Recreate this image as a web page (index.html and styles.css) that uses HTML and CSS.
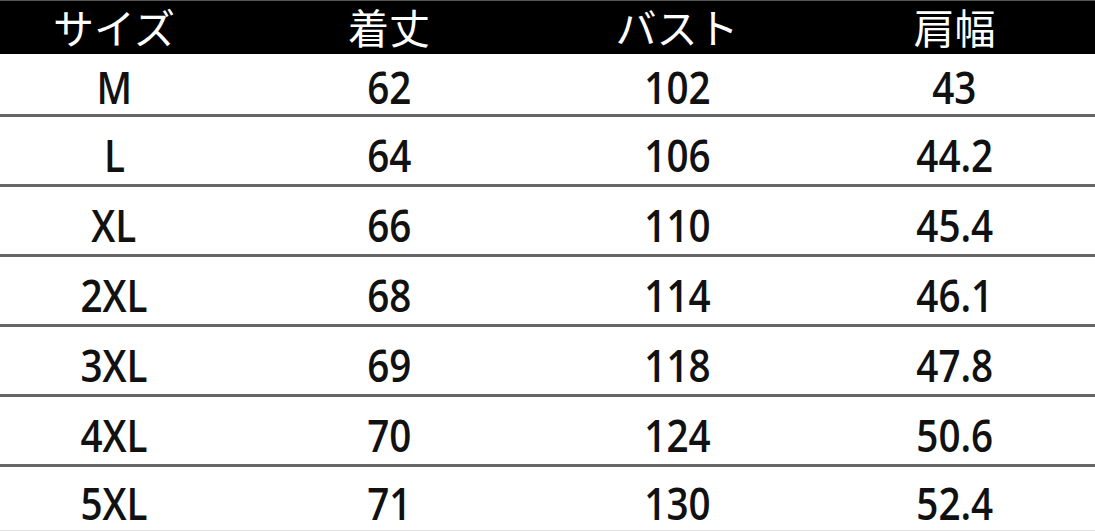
FILE: index.html
```html
<!DOCTYPE html>
<html lang="ja">
<head>
<meta charset="utf-8">
<link rel="stylesheet" href="styles.css">
</head>
<body>
<div class="table">
  <div class="row head">
    <div class="cell c1"><span>サイズ</span></div>
    <div class="cell c2"><span>着丈</span></div>
    <div class="cell c3"><span>バスト</span></div>
    <div class="cell c4"><span>肩幅</span></div>
  </div>
  <div class="row first">
    <div class="cell c1"><span>M</span></div>
    <div class="cell c2"><span>62</span></div>
    <div class="cell c3"><span>102</span></div>
    <div class="cell c4"><span>43</span></div>
  </div>
  <div class="row">
    <div class="cell c1"><span>L</span></div>
    <div class="cell c2"><span>64</span></div>
    <div class="cell c3"><span>106</span></div>
    <div class="cell c4"><span>44.2</span></div>
  </div>
  <div class="row">
    <div class="cell c1"><span>XL</span></div>
    <div class="cell c2"><span>66</span></div>
    <div class="cell c3"><span>110</span></div>
    <div class="cell c4"><span>45.4</span></div>
  </div>
  <div class="row">
    <div class="cell c1"><span>2XL</span></div>
    <div class="cell c2"><span>68</span></div>
    <div class="cell c3"><span>114</span></div>
    <div class="cell c4"><span>46.1</span></div>
  </div>
  <div class="row">
    <div class="cell c1"><span>3XL</span></div>
    <div class="cell c2"><span>69</span></div>
    <div class="cell c3"><span>118</span></div>
    <div class="cell c4"><span>47.8</span></div>
  </div>
  <div class="row">
    <div class="cell c1"><span>4XL</span></div>
    <div class="cell c2"><span>70</span></div>
    <div class="cell c3"><span>124</span></div>
    <div class="cell c4"><span>50.6</span></div>
  </div>
  <div class="row last">
    <div class="cell c1"><span>5XL</span></div>
    <div class="cell c2"><span>71</span></div>
    <div class="cell c3"><span>130</span></div>
    <div class="cell c4"><span>52.4</span></div>
  </div>
</div>
</body>
</html>
```
FILE: styles.css
```css
html, body {
  margin: 0;
  padding: 0;
  background: #ffffff;
}
.table {
  width: 1095px;
  height: 531px;
  display: flex;
  flex-direction: column;
}
.row {
  display: grid;
  grid-template-columns: 228px 322px 254px 291px;
  height: 67px;
  border-bottom: 3px solid #666666;
  box-sizing: content-box;
  font-family: "Open Sans", "Noto Sans", sans-serif;
  font-weight: 600;
  font-size: 46px;
  color: #111111;
}
.row.head {
  height: 53px;
  border-top: 1px solid #555555;
  border-bottom: none;
  background: #000000;
  color: #ffffff;
  font-family: "Noto Sans CJK JP", sans-serif;
  font-weight: 400;
  font-size: 41px;
}
.row.first {
  height: 60px;
}
.row.last {
  height: 63px;
  border-bottom: 1px solid #e4e4e4;
}
.cell {
  display: flex;
  align-items: center;
  justify-content: center;
  line-height: 1;
}
.cell span {
  display: inline-block;
  transform: scaleX(0.84);
  position: relative;
  top: 3px;
}
.head .cell {
  padding-bottom: 3px;
}
.head .cell span {
  transform: none;
  top: 0;
}
.row.first .cell span {
  top: 2px;
}
.c4 {
  padding-left: 10px;
}
```
